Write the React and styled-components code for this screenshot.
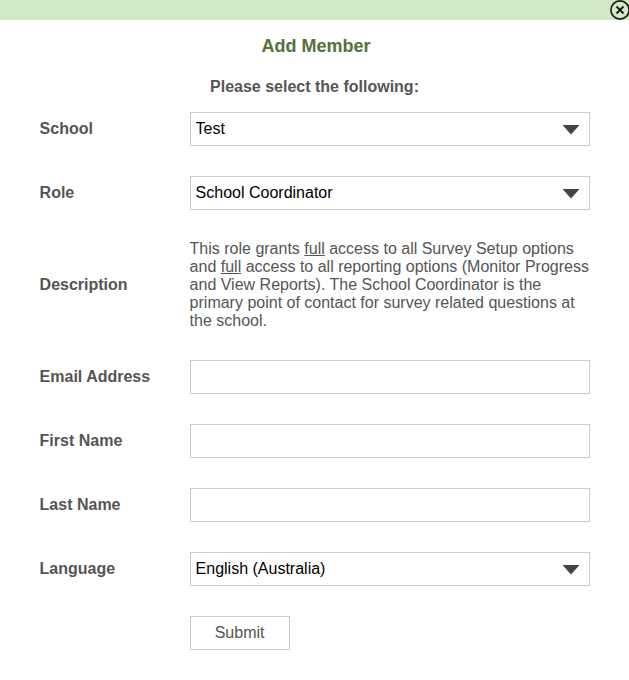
import React from 'react';
import styled, { createGlobalStyle, css } from 'styled-components';

const GlobalStyle = createGlobalStyle`
  * {
    box-sizing: border-box;
  }

  body {
    margin: 0;
    background: #ffffff;
    color: #555555;
    font-family: 'Liberation Sans', Arial, sans-serif;
    font-size: 16px;
    line-height: 18px;
  }
`;

const Dialog = styled.div`
  width: 629px;
  min-height: 680px;
`;

const TopBar = styled.div`
  display: flex;
  justify-content: flex-end;
  height: 20px;
  background: #d3e8c6;
`;

const CloseButton = styled.button`
  width: 20px;
  height: 20px;
  margin-right: -1px;
  padding: 0;
  border: none;
  background: none;
  cursor: pointer;

  svg {
    display: block;
  }
`;

const Title = styled.h1`
  margin: 16px 0 0 3px;
  color: #55703b;
  font-size: 18px;
  font-weight: bold;
  line-height: 20px;
  text-align: center;
`;

const Subtitle = styled.h2`
  margin: 22px 0 16px;
  font-size: 16px;
  font-weight: bold;
  line-height: 18px;
  text-align: center;
`;

const Form = styled.form`
  display: flex;
  flex-direction: column;
  gap: 30px;
  padding: 0 39px 0 39.6px;
`;

const Row = styled.div`
  display: grid;
  grid-template-columns: 150px 400px;
  align-items: center;
`;

const Label = styled.label`
  font-weight: bold;
`;

const control = css`
  width: 400px;
  height: 34px;
  padding: 0 5px;
  border: 1px solid #cccccc;
  border-radius: 0;
  background: #ffffff;
  color: #000000;
  font: inherit;
  outline: none;
`;

const Input = styled.input`
  ${control}
`;

const SelectBox = styled.div`
  position: relative;
  height: 34px;

  svg {
    position: absolute;
    top: 12px;
    right: 10px;
    pointer-events: none;
  }
`;

const Select = styled.select`
  ${control}
  appearance: none;
`;

const Description = styled.p`
  margin: 0;
`;

const SubmitButton = styled.button`
  grid-column: 2;
  width: 100px;
  height: 34px;
  padding: 0;
  border: 1px solid #cccccc;
  background: #ffffff;
  color: #555555;
  font: inherit;
  cursor: pointer;
`;

function SelectField({ id, label, value }) {
  return (
    <Row>
      <Label htmlFor={id}>{label}</Label>
      <SelectBox>
        <Select id={id} defaultValue={value}>
          <option value={value}>{value}</option>
        </Select>
        <svg width="18" height="12" viewBox="0 0 18 12">
          <path d="M0.5 1H17.5L9 10.5Z" fill="#444444" />
        </svg>
      </SelectBox>
    </Row>
  );
}

function TextField({ id, label }) {
  return (
    <Row>
      <Label htmlFor={id}>{label}</Label>
      <Input id={id} type="text" />
    </Row>
  );
}

export default function App() {
  return (
    <>
      <GlobalStyle />
      <Dialog>
        <TopBar>
          <CloseButton type="button" aria-label="Close">
            <svg width="20" height="20" viewBox="0 0 20 20" fill="none" stroke="#1a1a1a">
              <circle cx="10" cy="10" r="9.1" strokeWidth="1.6" />
              <path d="M6.5 6.5L13.5 13.5M13.5 6.5L6.5 13.5" strokeWidth="1.8" />
            </svg>
          </CloseButton>
        </TopBar>

        <Title>Add Member</Title>
        <Subtitle>Please select the following:</Subtitle>

        <Form onSubmit={(e) => e.preventDefault()}>
          <SelectField id="school" label="School" value="Test" />
          <SelectField id="role" label="Role" value="School Coordinator" />
          <Row>
            <Label as="span">Description</Label>
            <Description>
              This role grants <u>full</u> access to all Survey Setup options and{' '}
              <u>full</u> access to all reporting options (Monitor Progress and View
              Reports). The School Coordinator is the primary point of contact for
              survey related questions at the school.
            </Description>
          </Row>
          <TextField id="email" label="Email Address" />
          <TextField id="firstName" label="First Name" />
          <TextField id="lastName" label="Last Name" />
          <SelectField id="language" label="Language" value="English (Australia)" />
          <Row>
            <SubmitButton type="submit">Submit</SubmitButton>
          </Row>
        </Form>
      </Dialog>
    </>
  );
}
